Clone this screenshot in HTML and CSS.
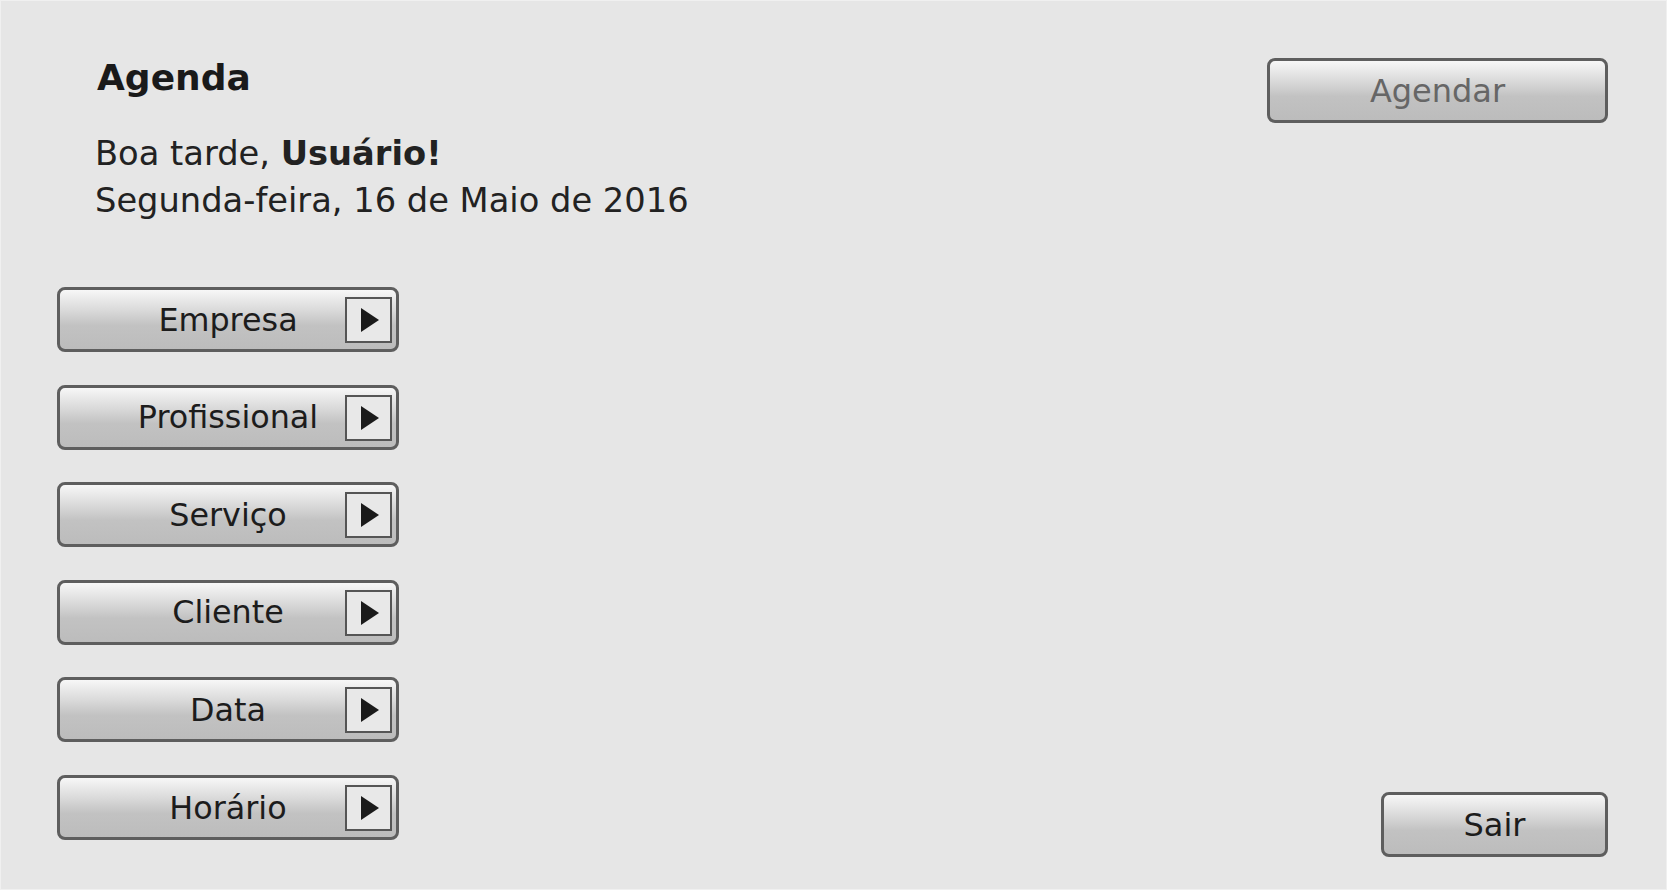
FILE: index.html
```html
<!DOCTYPE html>
<html lang="pt-BR">
<head>
<meta charset="utf-8">
<title>Agenda</title>
<link rel="stylesheet" href="styles.css">
</head>
<body>
<div class="screen">
  <div class="left">
    <header class="header">
      <h1 class="title">Agenda</h1>
      <p class="greeting">Boa tarde, <strong>Usuário!</strong><br>Segunda-feira, 16 de Maio de 2016</p>
    </header>
    <nav class="menu">
      <button class="btn menu-btn"><span class="label">Empresa</span><span class="arrow"><svg width="18" height="24" viewBox="0 0 18 24"><polygon points="0,0 18,12 0,24" fill="#1a1a1a"/></svg></span></button>
      <button class="btn menu-btn"><span class="label">Profissional</span><span class="arrow"><svg width="18" height="24" viewBox="0 0 18 24"><polygon points="0,0 18,12 0,24" fill="#1a1a1a"/></svg></span></button>
      <button class="btn menu-btn"><span class="label">Serviço</span><span class="arrow"><svg width="18" height="24" viewBox="0 0 18 24"><polygon points="0,0 18,12 0,24" fill="#1a1a1a"/></svg></span></button>
      <button class="btn menu-btn"><span class="label">Cliente</span><span class="arrow"><svg width="18" height="24" viewBox="0 0 18 24"><polygon points="0,0 18,12 0,24" fill="#1a1a1a"/></svg></span></button>
      <button class="btn menu-btn"><span class="label">Data</span><span class="arrow"><svg width="18" height="24" viewBox="0 0 18 24"><polygon points="0,0 18,12 0,24" fill="#1a1a1a"/></svg></span></button>
      <button class="btn menu-btn"><span class="label">Horário</span><span class="arrow"><svg width="18" height="24" viewBox="0 0 18 24"><polygon points="0,0 18,12 0,24" fill="#1a1a1a"/></svg></span></button>
    </nav>
  </div>
  <div class="right">
    <button class="btn action-btn disabled">Agendar</button>
    <button class="btn action-btn small">Sair</button>
  </div>
</div>
</body>
</html>
```
FILE: styles.css
```css
html, body {
  margin: 0;
  padding: 0;
}
body {
  width: 1667px;
  height: 890px;
  background: #e6e6e6;
  font-family: "DejaVu Sans", Verdana, sans-serif;
  color: #1f1f1f;
  overflow: hidden;
}
.screen {
  box-sizing: border-box;
  width: 1667px;
  height: 890px;
  border: 1px solid #f0f0f0;
  padding: 57px 58px 32px 56px;
  display: flex;
  justify-content: space-between;
}
.left {
  display: flex;
  flex-direction: column;
}
.header {
  padding-left: 40px;
}
.title {
  margin: 0;
  font-size: 36px;
  line-height: 40px;
  font-weight: bold;
  color: #1a1a1a;
}
.greeting {
  margin: 32px 0 0 -2px;
  font-size: 33.7px;
  line-height: 47px;
  color: #222;
}
.greeting strong {
  font-weight: bold;
}
.menu {
  margin-top: 63px;
  display: flex;
  flex-direction: column;
  gap: 32.6px;
}
.btn {
  box-sizing: border-box;
  height: 65px;
  border: 3px solid #5e5e5e;
  border-radius: 8px;
  background: linear-gradient(to bottom, #f7f7f7 0%, #d9d9d9 35%, #c2c2c2 60%, #bcbcbc 100%);
  font-family: "DejaVu Sans", Verdana, sans-serif;
  font-size: 32px;
  color: #1c1c1c;
  padding: 0;
  margin: 0;
  cursor: pointer;
}
.menu-btn {
  width: 342px;
  display: flex;
  align-items: center;
  justify-content: center;
  position: relative;
}
.label {
  font-size: 31.8px;
  line-height: 1;
}
.arrow {
  position: absolute;
  right: 4px;
  top: 7px;
  box-sizing: border-box;
  width: 47px;
  height: 46px;
  border: 2px solid #555;
  background: #e8e8e8;
  display: flex;
  align-items: center;
  justify-content: center;
  padding-left: 3px;
}
.arrow svg {
  display: block;
}
.right {
  display: flex;
  flex-direction: column;
  justify-content: space-between;
  align-items: flex-end;
}
.action-btn {
  width: 341px;
}
.action-btn.disabled {
  color: #666;
}
.action-btn.small {
  width: 227px;
}
```
